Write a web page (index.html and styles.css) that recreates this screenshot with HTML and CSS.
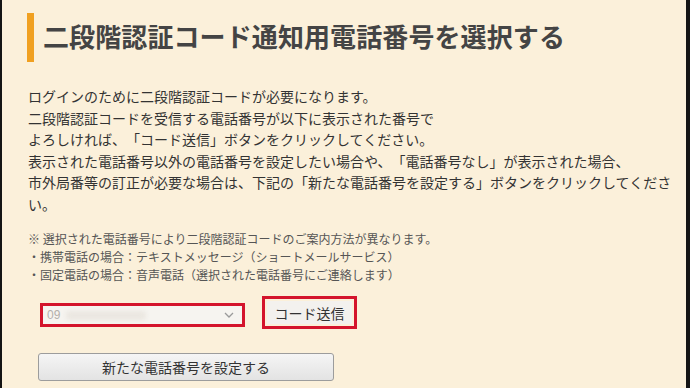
FILE: index.html
```html
<!DOCTYPE html>
<html lang="ja">
<head>
<meta charset="utf-8">
<title>二段階認証コード通知用電話番号を選択する</title>
<link rel="stylesheet" href="styles.css">
</head>
<body>
<div class="page">
  <div class="header">
    <span class="bar"></span>
    <h1 class="title">二段階認証コード通知用電話番号を選択する</h1>
  </div>
  <p class="intro">ログインのために二段階認証コードが必要になります。<br>二段階認証コードを受信する電話番号が以下に表示された番号で<br>よろしければ、「コード送信」ボタンをクリックしてください。<br>表示された電話番号以外の電話番号を設定したい場合や、「電話番号なし」が表示された場合、<br>市外局番等の訂正が必要な場合は、下記の「新たな電話番号を設定する」ボタンをクリックしてください。</p>
  <p class="note">※ 選択された電話番号により二段階認証コードのご案内方法が異なります。<br>・携帯電話の場合：テキストメッセージ（ショートメールサービス）<br>・固定電話の場合：音声電話（選択された電話番号にご連絡します）</p>
  <div class="row">
    <div class="hl hl-select">
      <div class="select">
        <span class="num">09</span><span class="blur"></span>
        <svg class="chev" width="10" height="6" viewBox="0 0 10 6"><path d="M1 1 L5 5 L9 1" fill="none" stroke="#9a9a9a" stroke-width="1.3"/></svg>
      </div>
    </div>
    <div class="hl hl-btn">
      <button class="send">コード送信</button>
    </div>
  </div>
  <button class="newnum">新たな電話番号を設定する</button>
</div>
</body>
</html>
```
FILE: styles.css
```css
html, body {
  margin: 0;
  padding: 0;
}
body {
  background: #141414;
  width: 690px;
  height: 388px;
  overflow: hidden;
  font-family: "Noto Sans CJK JP", "Noto Sans", sans-serif;
}
.page {
  margin: 0 4px 0 2px;
  height: 388px;
  background: #fbf0da;
  padding: 13px 6px 0 26px;
  box-sizing: border-box;
  color: #3a3a3a;
  text-spacing-trim: space-all;
}
.header {
  display: flex;
  align-items: center;
  gap: 9px;
  margin-left: -1px;
}
.bar {
  width: 7px;
  height: 49px;
  background: #f0a020;
  flex: none;
}
.title {
  margin: 0;
  font-size: 26px;
  font-weight: 700;
  color: #444;
  line-height: 49px;
  letter-spacing: 0.1px;
  position: relative;
  top: -2px;
}
.intro {
  margin: 24px 0 0;
  font-size: 14px;
  line-height: 21.5px;
  color: #333;
}
.note {
  margin: 15px 0 0;
  font-size: 12px;
  line-height: 18px;
  color: #555;
}
.row {
  display: flex;
  align-items: flex-start;
  margin-top: 12px;
  margin-left: 12px;
  gap: 17px;
}
.hl {
  border: 3px solid #d4142c;
  box-sizing: border-box;
}
.hl-select {
  width: 205px;
  height: 24px;
  margin-top: 7px;
}
.select {
  height: 18px;
  background: #f6f4f0;
  display: flex;
  align-items: center;
  padding: 0 8px 0 4px;
  font-size: 12px;
  color: #b4b0ab;
  font-family: "Liberation Sans", sans-serif;
}
.num {
  line-height: 18px;
}
.blur {
  width: 80px;
  height: 9px;
  margin-left: 6px;
  background: #ebe7e1;
  border-radius: 4px;
  filter: blur(2px);
}
.chev {
  margin-left: auto;
}
.hl-btn {
  width: 95px;
  height: 33px;
  padding: 2px;
}
.send {
  width: 100%;
  height: 100%;
  border: none;
  background: #f3f1ee;
  font-family: "Noto Sans CJK JP", sans-serif;
  font-size: 14px;
  color: #333;
  padding: 0;
  display: block;
}
.newnum {
  display: block;
  margin: 24px 0 0 10px;
  width: 296px;
  height: 28px;
  border: 1px solid #9c9c9c;
  border-radius: 3px;
  background: linear-gradient(#f5f5f5, #e3e3e3);
  font-family: "Noto Sans CJK JP", sans-serif;
  font-size: 14px;
  color: #333;
  padding: 0;
}
```
